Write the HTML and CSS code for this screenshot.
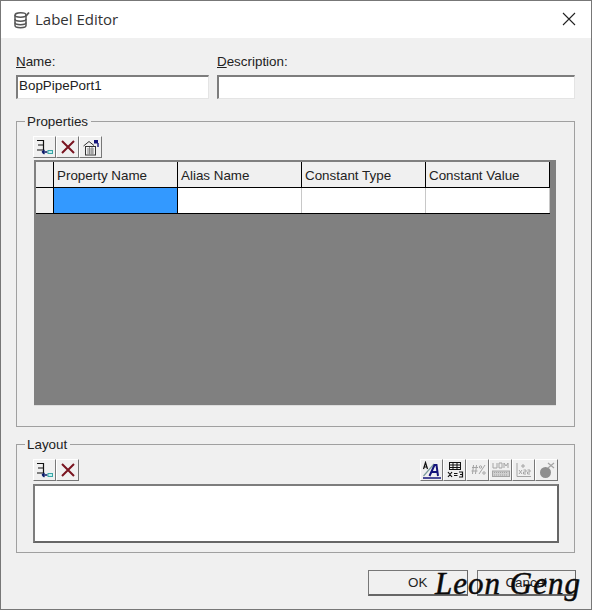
FILE: index.html
```html
<!DOCTYPE html>
<html lang="en">
<head>
  <meta charset="UTF-8">
  <title>Label Editor</title>
  <link rel="stylesheet" href="styles.css">
</head>
<body>
  <div class="dialog">
    <!-- Title bar -->
    <header class="title-bar">
      <svg class="app-icon" width="18" height="18" viewBox="0 0 18 18" fill="none" stroke="#555" stroke-width="1.5">
        <ellipse cx="7.5" cy="4" rx="5.5" ry="2.2"/>
        <path d="M2 4V14.5C2 15.7 4.5 16.7 7.5 16.7S13 15.7 13 14.5V4"/>
        <path d="M2 8C2 9.2 4.5 10.2 7.5 10.2S13 9.2 13 8M2 11.5C2 12.7 4.5 13.7 7.5 13.7S13 12.7 13 11.5"/>
        <path d="M13 5L16 1.5" stroke-width="1.8"/>
      </svg>
      <span class="title">Label Editor</span>
      <svg class="close" width="14" height="14" viewBox="0 0 14 14" stroke="#222" stroke-width="1.1"><path d="M1 1L13 13M13 1L1 13"/></svg>
    </header>

    <div class="content">
      <!-- Name and description -->
      <div class="fields">
        <div class="field field-name">
          <label><u>N</u>ame:</label>
          <div class="sunken">BopPipePort1</div>
        </div>
        <div class="field field-desc">
          <label><u>D</u>escription:</label>
          <div class="sunken"></div>
        </div>
      </div>

      <!-- Properties -->
      <section class="group group-props">
        <span class="legend">Properties</span>
        <div class="toolbar">
          <button class="tool">
            <svg width="18" height="16" viewBox="0 0 18 16" fill="none"><path d="M1 1.5H7.5V11H1M2 6H7.5" stroke="#111" stroke-width="1.2"/><path d="M6 13H11.5M6 13L8.5 11M6 13L8.5 15" stroke="#0a1a6a" stroke-width="1.4"/><rect x="12" y="11.5" width="4.5" height="3" fill="#c4f0f0" stroke="#3aa6a6" stroke-width="1"/></svg>
          </button>
          <button class="tool">
            <svg width="16" height="16" viewBox="0 0 16 16" stroke="#7a1420" stroke-width="2"><path d="M2 2L14 14M14 2L2 14"/></svg>
          </button>
          <button class="tool">
            <svg width="18" height="17" viewBox="0 0 18 17" fill="none" stroke="#333"><path d="M1.5 7L7 2.5L12 6.5"/><rect x="3.5" y="7.5" width="10" height="8.5" fill="#f4f4f4"/><path d="M5 10H12M5 12H12M5 14H12M7.5 8V16M10 8V16" stroke="#888"/><rect x="12" y="1" width="4" height="3.5" fill="#14147a" stroke="none"/><path d="M16 4V8" stroke="#14147a" stroke-width="1.4"/></svg>
          </button>
        </div>
        <div class="grid-area">
          <div class="grid">
            <div class="cell head corner"></div>
            <div class="cell head">Property Name</div>
            <div class="cell head">Alias Name</div>
            <div class="cell head">Constant Type</div>
            <div class="cell head">Constant Value</div>
            <div class="cell head corner row-head"></div>
            <div class="cell selected"></div>
            <div class="cell"></div>
            <div class="cell"></div>
            <div class="cell"></div>
          </div>
        </div>
      </section>

      <!-- Layout -->
      <section class="group group-layout">
        <span class="legend">Layout</span>
        <div class="toolbar">
          <button class="tool">
            <svg width="18" height="16" viewBox="0 0 18 16" fill="none"><path d="M1 1.5H7.5V11H1M2 6H7.5" stroke="#111" stroke-width="1.2"/><path d="M6 13H11.5M6 13L8.5 11M6 13L8.5 15" stroke="#0a1a6a" stroke-width="1.4"/><rect x="12" y="11.5" width="4.5" height="3" fill="#c4f0f0" stroke="#3aa6a6" stroke-width="1"/></svg>
          </button>
          <button class="tool">
            <svg width="16" height="16" viewBox="0 0 16 16" stroke="#7a1420" stroke-width="2"><path d="M2 2L14 14M14 2L2 14"/></svg>
          </button>
          <div class="tool-right">
            <button class="tool">
              <svg width="20" height="18" viewBox="0 0 20 18" fill="none"><path d="M1.5 8L3.5 1.5L5.5 8M2.3 6H4.7" stroke="#111" stroke-width="1.2"/><path d="M1.5 15L12 3" stroke="#7a9a9a" stroke-width="1.2"/><path d="M7.5 15L12.5 4H14.5L16 15M10 11H15.5" stroke="#14147a" stroke-width="2"/><path d="M1 17H19" stroke="#14147a" stroke-width="1.5"/></svg>
            </button>
            <button class="tool">
              <svg width="18" height="18" viewBox="0 0 18 18" fill="none" stroke="#111"><rect x="3.5" y="1.5" width="11" height="7"/><path d="M3.5 4H14.5M3.5 6.5H14.5M7 1.5V8.5M11 1.5V8.5"/><path d="M2 11L6 16M6 11L2 16M8 12.5H11.5M8 14.5H11.5M13 11H16.5V16H13M14 13.5H16.5" stroke-width="1.2"/></svg>
            </button>
            <button class="tool off">
              <svg width="18" height="16" viewBox="0 0 18 16" fill="none" stroke="#a4a4a4"><path d="M3 5.5H9M2.5 9H8.5M4.5 3L3.5 12M7.5 3L6.5 12M10 12L16 3"/><circle cx="11.5" cy="5" r="1.2"/><circle cx="15" cy="11" r="1.2"/></svg>
            </button>
            <button class="tool off">
              <svg width="20" height="16" viewBox="0 0 20 16" fill="none" stroke="#a4a4a4"><path d="M2 1V6H6V1M8 1H11V6H8ZM13 6V1L15 4L17 1V6"/><rect x="1.5" y="9" width="17" height="5.5" fill="#d0d0d0"/><path d="M3 10.5H17M3 13H17" stroke-dasharray="1 1"/></svg>
            </button>
            <button class="tool off">
              <svg width="18" height="16" viewBox="0 0 18 16" fill="none" stroke="#a4a4a4"><path d="M2 14.5H16M2 1V14.5"/><path d="M8 2V6M6 4H10" /><path d="M4 8L7 12M7 8L4 12M8.5 8H11V10H8.5V12H11M12.5 8H15V10H12.5V12H15"/></svg>
            </button>
            <button class="tool off">
              <svg width="18" height="18" viewBox="0 0 18 18"><circle cx="7.5" cy="11.5" r="5.5" fill="#8e8e8e"/><path d="M10 7L16 2M10 2L16 7" stroke="#a4a4a4" stroke-width="1.2"/></svg>
            </button>
          </div>
        </div>
        <div class="sunken text-area"></div>
      </section>

      <!-- Buttons -->
      <div class="actions">
        <button class="push">OK</button>
        <button class="push">Cancel</button>
      </div>
    </div>
    <span class="watermark">Leon Geng</span>
  </div>
</body>
</html>
```

FILE: styles.css
```css
/* Global Styles */
* {
  box-sizing: border-box;
  margin: 0;
  padding: 0;
}

body {
  width: 592px;
  height: 610px;
  overflow: hidden;
  font-family: "Liberation Sans", Arial, sans-serif;
  font-size: 13.4px;
  color: #222;
  background-color: #f0f0f0;
}

.dialog {
  position: relative;
  width: 592px;
  height: 610px;
  border: 1px solid #777;
  display: flex;
  flex-direction: column;
}

/* Title Bar */
.title-bar {
  height: 37px;
  flex: none;
  background-color: #fff;
  display: flex;
  align-items: center;
  padding: 0 15px 0 12px;
}

.app-icon {
  margin-right: 4px;
}

.title {
  font-family: "Open Sans", sans-serif;
  font-size: 15px;
  line-height: 20px;
  margin-top: -2px;
  color: #333;
  flex: 1;
}

.close {
  margin-top: -1px;
}

/* Fields */
.content {
  flex: 1;
  padding: 15px 15px 0;
}

.fields {
  display: flex;
  gap: 8px;
}

.field label {
  display: block;
  height: 22px;
  line-height: 18px;
}

.field-name {
  width: 193px;
}

.field-desc {
  width: 358px;
}

.sunken {
  height: 24px;
  padding-left: 1px;
  line-height: 17px;
  background-color: #fff;
  border-top: 2px solid #7d7d7d;
  border-left: 2px solid #7d7d7d;
  border-right: 1px solid #e4e4e4;
  border-bottom: 1px solid #e4e4e4;
}

/* Group Boxes */
.group {
  position: relative;
  width: 559px;
  border: 1px solid #a0a0a0;
  padding: 14px 16px 0;
}

.group-props {
  height: 306px;
  margin-top: 22px;
}

.group-layout {
  height: 109px;
  margin-top: 17px;
}

.legend {
  position: absolute;
  top: -8px;
  left: 8px;
  padding: 0 3px 0 2px;
  line-height: 16px;
  background-color: #f0f0f0;
}

/* Toolbars */
.toolbar {
  display: flex;
  height: 23px;
}

.tool {
  width: 23px;
  height: 22px;
  display: flex;
  align-items: center;
  justify-content: center;
  background-color: #f0f0f0;
  border: 1px solid;
  border-color: #fff #777 #777 #fff;
}

.tool-right {
  margin-left: auto;
  display: flex;
}

/* Grid */
.grid-area {
  width: 522px;
  height: 246px;
  margin-top: 1px;
  margin-left: 1px;
  padding: 2px;
  background-color: #808080;
  border-bottom: 1px solid #ddd;
}

.grid {
  width: 514px;
  display: grid;
  grid-template-columns: 18px 124px 124px 124px 124px;
  grid-template-rows: 26px 25px;
  background-color: #fff;
  border: solid #000;
  border-width: 0 1px 1px 0;
}

.cell {
  border-right: 1px solid #c8c8c8;
}

.head {
  padding: 1px 0 0 3px;
  line-height: 26px;
  background-color: #f0f0f0;
  border-right: 1px solid #000;
  border-bottom: 1px solid #000;
}

.row-head {
  border-bottom: 0;
}

.selected {
  background-color: #3399ff;
  border-right: 1px solid #000;
}

/* Layout text area */
.text-area {
  width: 526px;
  height: 59px;
  margin-top: 2px;
  border-bottom: 2px solid #666;
  border-right: 2px solid #666;
}

/* Dialog Buttons */
.actions {
  display: flex;
  gap: 9px;
  margin-top: 17px;
  margin-left: 352px;
}

.push {
  width: 100px;
  height: 26px;
  font-family: inherit;
  font-size: 13.4px;
  color: #222;
  background-color: #f0f0f0;
  border: 1px solid;
  border-color: #777 #666 #666 #777;
  border-bottom-width: 2px;
}

.watermark {
  position: absolute;
  left: 434px;
  top: 566px;
  font-family: "Liberation Serif", serif;
  font-style: italic;
  font-size: 31px;
  line-height: 34px;
  letter-spacing: 1px;
  -webkit-text-stroke: 0.5px #0a0a0a;
  white-space: nowrap;
  color: #0a0a0a;
}
```
